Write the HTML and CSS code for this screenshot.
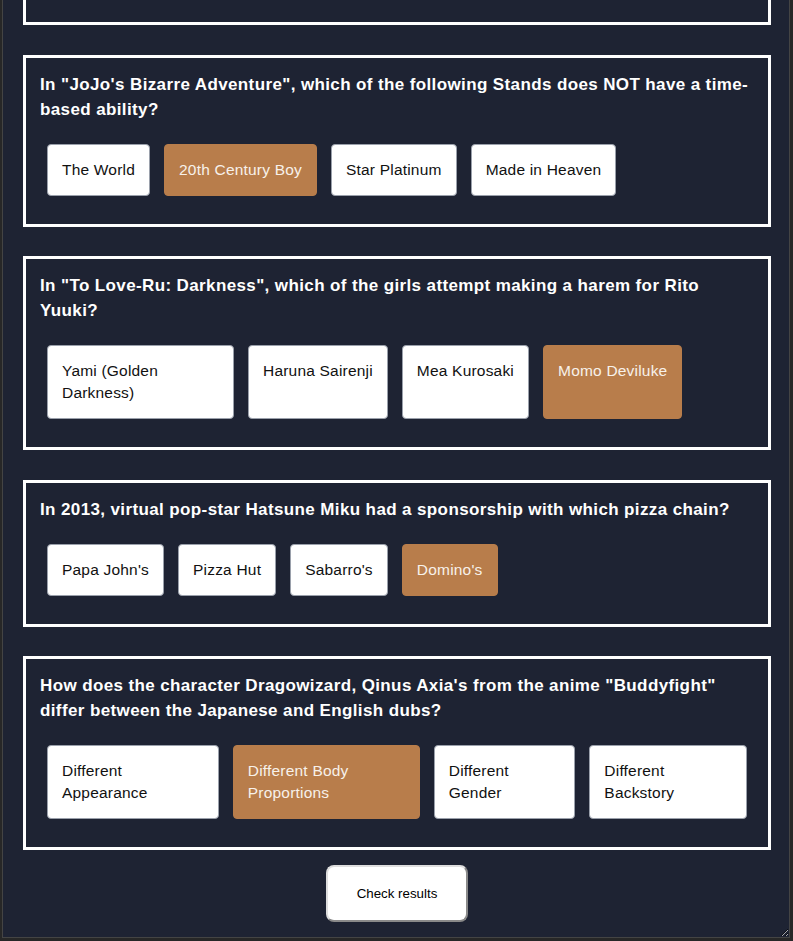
FILE: index.html
```html
<!DOCTYPE html>
<html lang="en">
<head>
<meta charset="utf-8">
<title>Anime Quiz</title>
<link rel="stylesheet" href="styles.css">
</head>
<body>
<div class="frame">
  <div class="quiz">
    <section class="card card-earlier" aria-hidden="true"></section>
    <section class="card">
      <h3 class="question">In "JoJo's Bizarre Adventure", which of the following Stands does NOT have a time-based ability?</h3>
      <div class="options">
        <div class="option">The World</div>
        <div class="option selected">20th Century Boy</div>
        <div class="option">Star Platinum</div>
        <div class="option">Made in Heaven</div>
      </div>
    </section>
    <section class="card">
      <h3 class="question">In "To Love-Ru: Darkness", which of the girls attempt making a harem for Rito Yuuki?</h3>
      <div class="options">
        <div class="option">Yami (Golden Darkness)</div>
        <div class="option">Haruna Sairenji</div>
        <div class="option">Mea Kurosaki</div>
        <div class="option selected">Momo Deviluke</div>
      </div>
    </section>
    <section class="card">
      <h3 class="question">In 2013, virtual pop-star Hatsune Miku had a sponsorship with which pizza chain?</h3>
      <div class="options">
        <div class="option">Papa John's</div>
        <div class="option">Pizza Hut</div>
        <div class="option">Sabarro's</div>
        <div class="option selected">Domino's</div>
      </div>
    </section>
    <section class="card">
      <h3 class="question">How does the character Dragowizard, Qinus Axia's from the anime "Buddyfight" differ between the Japanese and English dubs?</h3>
      <div class="options">
        <div class="option">Different Appearance</div>
        <div class="option selected">Different Body Proportions</div>
        <div class="option">Different Gender</div>
        <div class="option">Different Backstory</div>
      </div>
    </section>
  </div>
  <div class="actions">
    <button class="check" type="button">Check results</button>
  </div>
</div>
</body>
</html>
```
FILE: styles.css
```css
html, body {
  margin: 0;
  height: 100%;
}

body {
  box-sizing: border-box;
  height: 100vh;
  overflow: hidden;
  display: flex;
  flex-direction: column;
  justify-content: flex-end;
  padding: 0 3px 3px 2px;
  background: #272727;
  font-family: "Liberation Sans", Arial, sans-serif;
}

.frame {
  flex-shrink: 0;
  background: #1e2333;
  border: 1px solid #444;
  overflow: hidden;
  resize: both;
  padding: 20px 18px 0 20px;
}

.quiz {
  display: flex;
  flex-direction: column;
  gap: 29.5px;
}

.card {
  border: 3px solid #ffffff;
  padding: 14px 14px 21px;
}

.card-earlier {
  min-height: 150px;
}

.question {
  margin: 0 0 15px;
  color: #ffffff;
  font-family: "Liberation Sans", Arial, sans-serif;
  font-weight: 700;
  font-size: 17px;
  line-height: 25px;
  letter-spacing: 0.38px;
}

.options {
  display: flex;
}

.option {
  box-sizing: border-box;
  max-width: 187px;
  margin: 7px;
  padding: 14px;
  background: #ffffff;
  color: #111111;
  border: 1px solid #9aa0ab;
  border-radius: 4px;
  font-size: 15.5px;
  line-height: 22px;
  letter-spacing: 0.2px;
  text-align: left;
  cursor: pointer;
}

.option.selected {
  background: #b87d4b;
  border-color: #b87d4b;
  color: #f7f1ea;
}

.actions {
  display: flex;
  justify-content: center;
  padding: 15px 0;
}

.check {
  font-family: "Liberation Sans", Arial, sans-serif;
  font-size: 13.333px;
  color: #000;
  background: #ffffff;
  padding: 19px 29px;
  border: 2px solid;
  border-color: #dedede #8a8a8a #8a8a8a #dedede;
  border-radius: 8px;
  cursor: pointer;
}
```
